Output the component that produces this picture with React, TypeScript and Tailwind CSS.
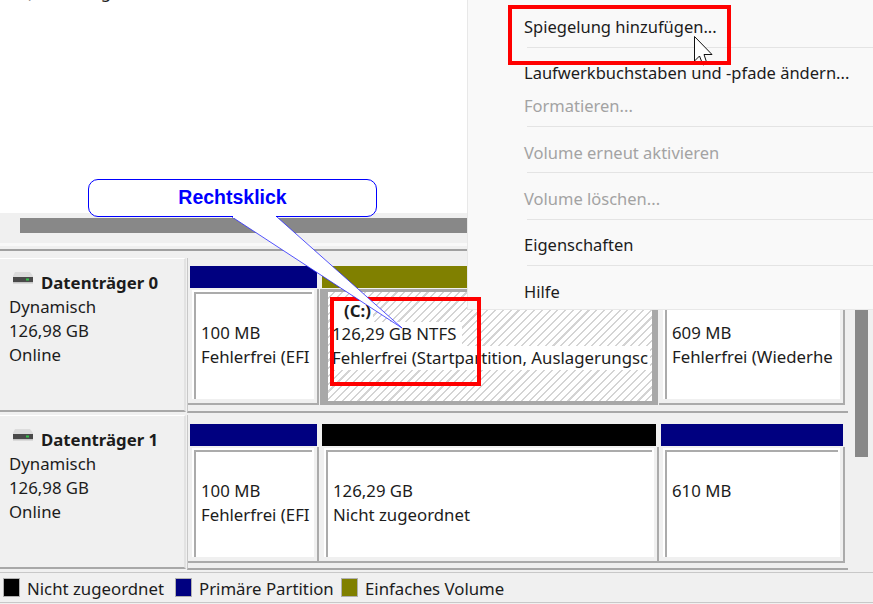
import React from 'react';

const font = { fontFamily: '"Noto Sans", sans-serif' };

const DiskIcon = () => (
  <svg width="22" height="14" viewBox="0 0 22 14" className="shrink-0">
    <path d="M3 1h15l3 4v6H1V5z" fill="#dcdcdc" />
    <rect x="1" y="6" width="20" height="5" fill="#4a4a4a" />
    <rect x="14" y="7.5" width="3" height="2" fill="#35c04a" />
    <rect x="1" y="11" width="20" height="1.5" fill="#c4c4c4" />
  </svg>
);

const DiskLabel = ({ name }: { name: string }) => (
  <div className="w-[186px] h-[154px] shrink-0 bg-[#f0f0f0] border-t border-t-white border-r-2 border-b-2 border-r-[#e2e2e2] border-b-[#a8a8a8] pl-[9px] pt-[12px] text-[16.8px] leading-[24px] text-[#1c1c1c]">
    <div className="flex items-center gap-[7px] ml-[3px]">
      <div className="-mt-[10px]">
        <DiskIcon />
      </div>
      <span className="font-bold">{name}</span>
    </div>
    <div>Dynamisch</div>
    <div>126,98 GB</div>
    <div>Online</div>
  </div>
);

type PartitionProps = {
  width: string;
  bar: string;
  frame?: string;
  lines: string[];
};

const Partition = ({ width, bar, frame = 'pl-[4px]', lines }: PartitionProps) => (
  <div className={`${width} shrink-0`}>
    <div className={`${bar} h-[22px]`} />
    <div className={`${frame} mt-[1px] h-[116px] bg-[#f0f0f0] border-r-2 border-b-2 border-[#ababab] pt-[1px] pr-[3px] pb-[4px]`}>
      <div className="h-full bg-white pl-[2px] pt-[2px] pr-[2px]">
        <div className="h-full border-l-2 border-t-2 border-[#ababab] pl-[5px] pt-[27px] text-[16.8px] leading-[24px] text-[#1c1c1c] whitespace-nowrap overflow-hidden">
          {lines.map((line) => (
            <div key={line}>{line}</div>
          ))}
        </div>
      </div>
    </div>
  </div>
);

const SystemPartition = () => (
  <div className="w-[340px] shrink-0">
    <div className="bg-[#808000] h-[22px] ml-[3px] mr-[3px]" />
    <div className="mt-[1px] h-[116px] bg-[#a8a8a8] ml-[1px] mr-[1px] pl-[8px] pt-[3px] pr-[6px] pb-[4px]">
      <div className="h-full bg-[repeating-linear-gradient(135deg,#ffffff_0px,#ffffff_4px,#d4d4d4_4px,#d4d4d4_5.5px)] pl-[4px] pt-[8px] text-[16.8px] leading-[24px] text-[#1c1c1c] whitespace-nowrap overflow-hidden">
        <div className="bg-white w-fit pl-[12px] pr-[2px] font-bold leading-[22px]">(C:)</div>
        <div className="bg-white w-fit pr-[6px]">126,29 GB NTFS</div>
        <div className="bg-white w-fit pr-[2px]">Fehlerfrei (Startpartition, Auslagerungsc</div>
      </div>
    </div>
  </div>
);

const MenuItem = ({ label, off }: { label: string; off?: boolean }) => (
  <div className={`h-[33px] flex items-center pl-[56px] text-[16.5px] whitespace-nowrap ${off ? 'text-[#a3a3a3]' : 'text-[#1c1c1c]'}`}>
    {label}
  </div>
);

const MenuLine = () => <div className="ml-[59px] mt-[3px] mb-[9.4px] h-px bg-[#e4e4e4]" />;

const LegendItem = ({ color, label, width }: { color: string; label: string; width: string }) => (
  <div className={`flex items-center ${width}`}>
    <div className={`${color} w-[17px] h-[19px] border border-[#b0b0b0] shrink-0`} />
    <span className="ml-[7px] pt-[3px] text-[16.8px] text-[#1c1c1c] whitespace-nowrap">{label}</span>
  </div>
);

export default function App() {
  return (
    <div style={font} className="relative w-[873px] h-[604px] overflow-hidden bg-[#f0f0f0]">
      {/* table above, only the descenders of the last row are left */}
      <div className="h-[213px] bg-white overflow-hidden">
        <div className="-mt-[20px] pl-[26px] text-[16.8px] leading-[24px] text-[#1c1c1c] whitespace-nowrap">(Datenträger 0</div>
      </div>

      {/* horizontal scrollbar */}
      <div className="h-[45px] pt-[5px]">
        <div className="ml-[20px] h-[15px] bg-[#888888]" />
        <div className="mt-[10px] h-[3px] bg-[#f9f9f9]" />
        <div className="mt-[3px] h-[2px] bg-[#a0a0a0]" />
      </div>

      {/* disks */}
      <div className="flex h-[314px]">
        <div className="w-[855px] shrink-0">
          <div className="flex h-[157px]">
            <DiskLabel name="Datenträger 0" />
            <div className="flex-1 ml-[1px] border-l border-[#c8c8c8] h-[155px] border-b-2 border-b-[#a8a8a8] mr-[7px] pt-[8px] flex">
              <Partition width="w-[131px]" bar="bg-[#000080] ml-[2px] mr-[2px]" lines={['100 MB', 'Fehlerfrei (EFI']} />
              <SystemPartition />
              <Partition width="w-[186px]" bar="bg-[#000080] ml-[2px] mr-[2px]" lines={['609 MB', 'Fehlerfrei (Wiederhe']} />
            </div>
          </div>
          <div className="flex h-[157px]">
            <DiskLabel name="Datenträger 1" />
            <div className="flex-1 ml-[1px] border-l border-[#c8c8c8] h-[155px] border-b-2 border-b-[#a8a8a8] mr-[7px] pt-[9px] flex">
              <Partition width="w-[131px]" bar="bg-[#000080] ml-[2px] mr-[2px]" lines={['100 MB', 'Fehlerfrei (EFI']} />
              <Partition width="w-[340px]" bar="bg-black ml-[3px] mr-[3px]" frame="pl-[5px]" lines={['126,29 GB', 'Nicht zugeordnet']} />
              <Partition width="w-[186px]" bar="bg-[#000080] ml-[2px] mr-[2px]" lines={['610 MB']} />
            </div>
          </div>
        </div>
        <div className="w-[13px] h-[199px] bg-[#888888] shrink-0" />
      </div>

      {/* legend */}
      <div className="h-[31px] border-t border-b border-[#c8c8c8] pl-[3px] flex items-center">
        <LegendItem color="bg-black" label="Nicht zugeordnet" width="w-[172px]" />
        <LegendItem color="bg-[#000080]" label="Primäre Partition" width="w-[166px]" />
        <LegendItem color="bg-[#808000]" label="Einfaches Volume" width="w-[200px]" />
      </div>

      {/* context menu */}
      <div className="absolute left-[467px] top-0 w-[406px] h-[310px] bg-[#f9f9f9] border-l border-b border-[#e8e8e8] overflow-hidden">
        <div className="-mt-[26px]">
          <MenuItem label="Volume verkleinern..." off />
        </div>
        <div className="mt-[3.6px]">
          <MenuItem label="Spiegelung hinzufügen..." />
        </div>
        <MenuLine />
        <MenuItem label="Laufwerkbuchstaben und -pfade ändern..." />
        <MenuItem label="Formatieren..." off />
        <MenuLine />
        <MenuItem label="Volume erneut aktivieren" off />
        <MenuLine />
        <MenuItem label="Volume löschen..." off />
        <MenuLine />
        <MenuItem label="Eigenschaften" />
        <MenuLine />
        <MenuItem label="Hilfe" />
      </div>

      {/* mouse pointer */}
      <svg className="absolute left-[692px] top-[35px]" width="24" height="32" viewBox="0 0 24 32">
        <path d="M2.5 1.5V26L7.5 21L11 30L15 28.5L12 19.5H20Z" fill="#fff" stroke="#111" strokeWidth="1" />
      </svg>

      {/* annotations */}
      <div className="absolute left-[508px] top-[5px] w-[223px] h-[60px] border-4 border-[#ff0000]" />
      <div className="absolute left-[330px] top-[297px] w-[151px] h-[89px] border-4 border-[#ff0000]" />

      <svg className="absolute left-[225px] top-[210px]" width="190" height="125" viewBox="0 0 190 125">
        <path d="M7 7L177 118L52 7" fill="#fff" stroke="#2a2aff" strokeWidth="0.8" />
      </svg>
      <div className="absolute left-[88px] top-[179px] w-[289px] h-[38px] rounded-[10px] border border-[#0000ff] flex items-center justify-center text-[19.5px] font-bold text-[#0000ff] bg-white [font-family:'Liberation_Sans',sans-serif]">
        Rechtsklick
      </div>
      <div className="absolute left-[233px] top-[215px] w-[43px] h-[3px] bg-white" />
    </div>
  );
}
